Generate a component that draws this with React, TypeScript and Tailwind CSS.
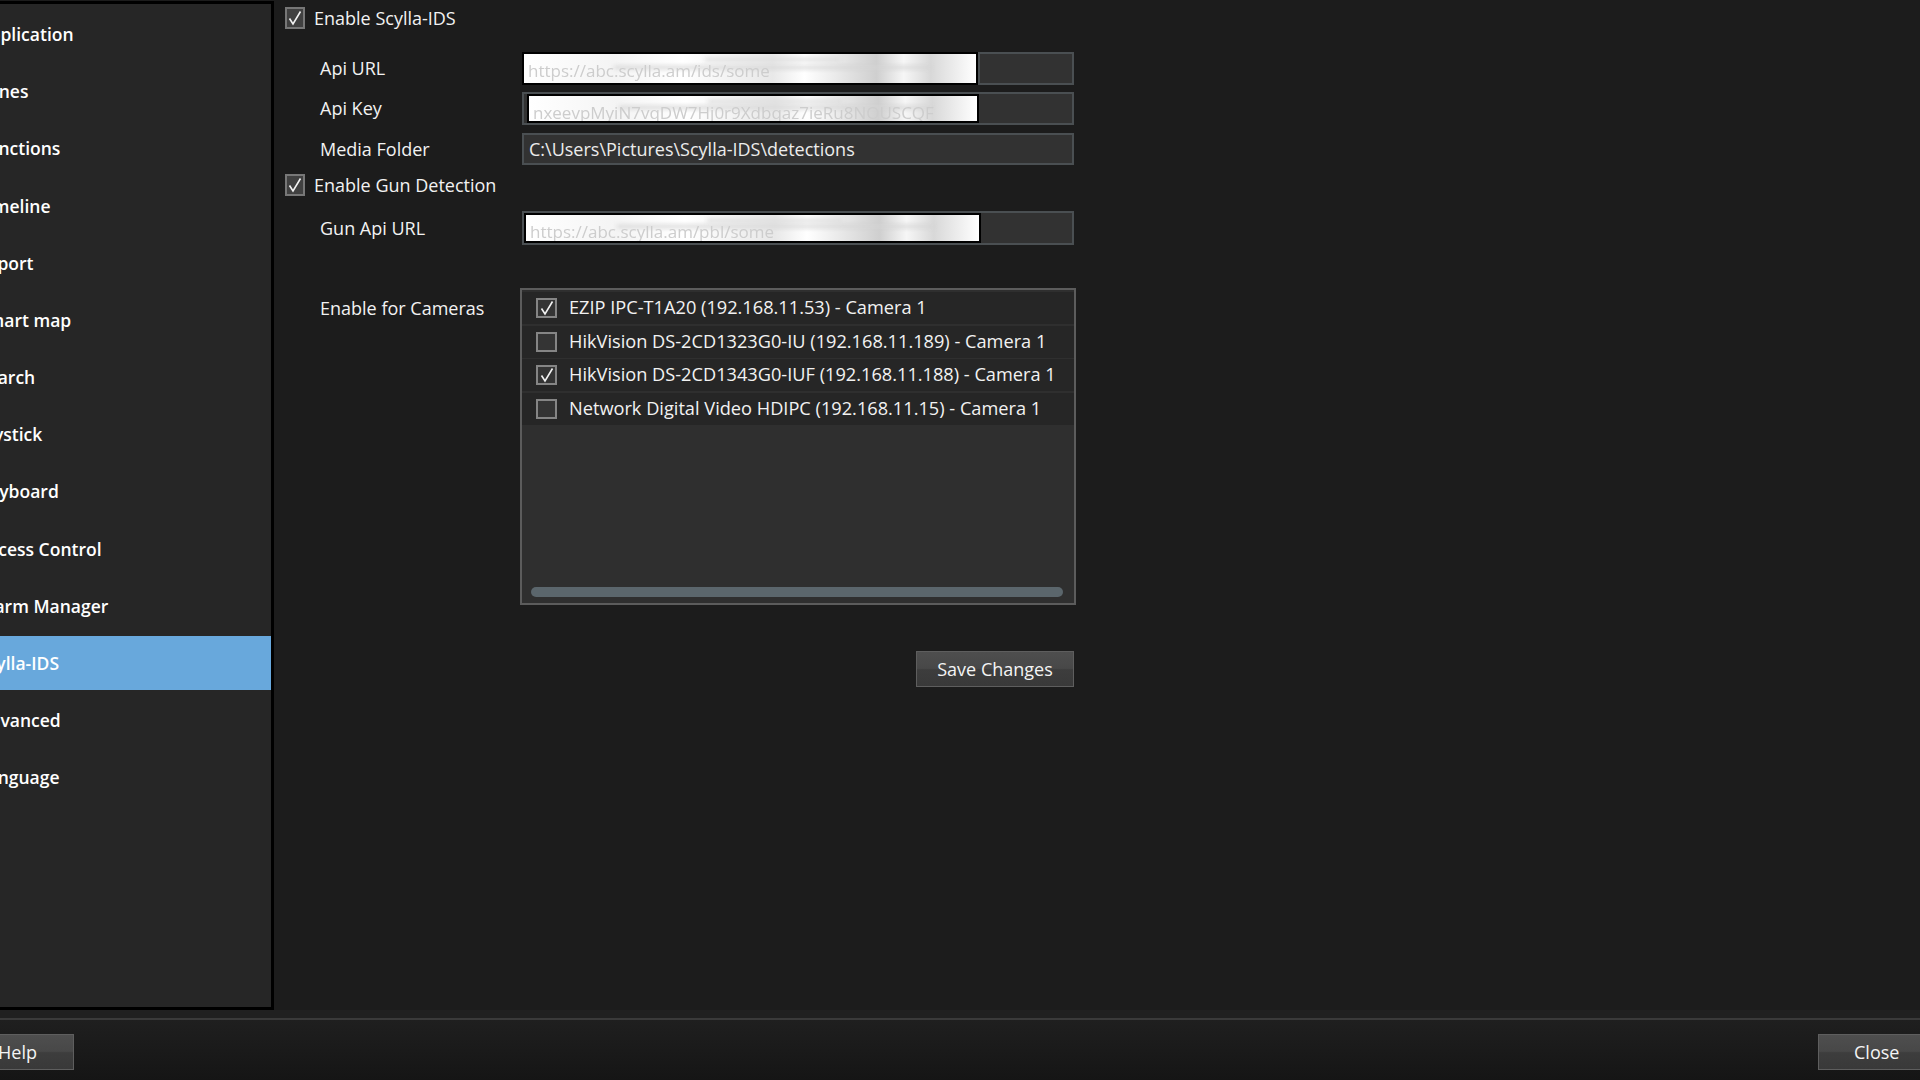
import React from "react";

const menu = [
  "Application",
  "Zones",
  "Functions",
  "Timeline",
  "Export",
  "Smart map",
  "Search",
  "Joystick",
  "Keyboard",
  "Access Control",
  "Alarm Manager",
  "Scylla-IDS",
  "Advanced",
  "Language",
];

const cameras = [
  { name: "EZIP IPC-T1A20 (192.168.11.53) - Camera 1", on: true },
  { name: "HikVision DS-2CD1323G0-IU (192.168.11.189) - Camera 1", on: false },
  { name: "HikVision DS-2CD1343G0-IUF (192.168.11.188) - Camera 1", on: true },
  { name: "Network Digital Video HDIPC (192.168.11.15) - Camera 1", on: false },
];

const CheckBox = ({ checked, small }: { checked: boolean; small?: boolean }) => (
  <div
    className={`flex items-center justify-center border-2 shrink-0 ${
      small ? "w-[21px] h-[20px] border-[#858585] bg-[#343434]" : "w-[20px] h-[22px] border-[#777777] bg-[#404040]"
    }`}
  >
    {checked && (
      <svg width="16" height="16" viewBox="0 0 16 16" fill="none">
        <path d="M2.5 8.5 L6 14 L13.5 1.5" stroke="#f2f2f2" strokeWidth="1.6" />
      </svg>
    )}
  </div>
);

// redacted (smudged) value inside a text box
const Redacted = ({ text, offset, width }: { text: string; offset: string; width: string }) => (
  <div className={`relative h-full ${offset} ${width} border-2 border-black bg-white overflow-hidden shrink-0`}>
    <div className="absolute inset-0 bg-[linear-gradient(90deg,#ffffff_0%,#f4f4f4_20%,#ffffff_35%,#e8e8e8_55%,#ffffff_62%,#cfcfcf_78%,#f6f6f6_84%,#d8d8d8_90%,#ffffff_100%)]" />
    <div className="absolute left-[20%] right-[10%] top-[40%] h-[3px] bg-[#d4d4d4] blur-[2px]" />
    <div className="absolute left-[40%] right-[30%] top-[15%] h-[3px] bg-[#dadada] blur-[2px]" />
    <span className="absolute left-[4px] top-[4px] text-[17px] text-[#cdcdcd] blur-[0.6px] whitespace-nowrap">{text}</span>
  </div>
);

const Label = ({ children }: { children: React.ReactNode }) => (
  <div className="w-[202px] text-[18px] text-[#f2f2f2] shrink-0">{children}</div>
);

const WinButton = ({ children, className }: { children: React.ReactNode; className: string }) => (
  <button
    className={`h-[36px] border border-[#5e5e5e] bg-[linear-gradient(to_bottom,#4e4e4e_0%,#484848_48%,#3d3d3d_52%,#393939_100%)] text-[18px] text-[#f4f4f4] ${className}`}
  >
    {children}
  </button>
);

export default function App() {
  return (
    <div className="w-[1920px] h-[1080px] overflow-hidden bg-[#1c1c1c] flex flex-col font-['Open_Sans',sans-serif]">
      <div className="h-[1010px] flex">
        {/* sidebar */}
        <aside className="-ml-[30px] w-[304px] h-[1009px] mt-[1px] border-[3px] border-black bg-[#262626] pt-[3px] shrink-0">
          {menu.map((m) => (
            <div
              key={m}
              className={`h-[54.2px] mb-[3px] pl-[5px] flex items-center text-[17.5px] font-semibold text-white whitespace-nowrap ${
                m === "Scylla-IDS" ? "bg-[#68a8dc]" : ""
              }`}
            >
              {m}
            </div>
          ))}
        </aside>

        {/* settings */}
        <main className="pl-[11px] flex flex-col">
          <div className="mt-[7px] h-[22px] flex items-center gap-[9px] text-[18px] text-[#f2f2f2]">
            <CheckBox checked />
            Enable Scylla-IDS
          </div>

          <div className="mt-[23px] ml-[35px] flex items-center">
            <Label>Api URL</Label>
            <div className="w-[552px] h-[33px] flex">
              <Redacted text="https://abc.scylla.am/ids/some" offset="" width="w-[456px]" />
              <div className="flex-1 border-2 border-[#4a4f52] bg-[#323232]" />
            </div>
          </div>

          <div className="mt-[7px] ml-[35px] flex items-center">
            <Label>Api Key</Label>
            <div className="w-[552px] h-[33px] flex border-2 border-[#4a4f52] bg-[#323232]">
              <Redacted text="nxeevpMyiN7vqDW7Hj0r9Xdbqaz7ieRu8NOUSCQF" offset="ml-[3px]" width="w-[452px]" />
            </div>
          </div>

          <div className="mt-[8px] ml-[35px] flex items-center">
            <Label>Media Folder</Label>
            <div className="w-[552px] h-[32px] flex items-center border-2 border-[#4a4f52] bg-[#323232] pl-[5px] text-[18px] text-[#ececec]">
              C:\Users\Pictures\Scylla-IDS\detections
            </div>
          </div>

          <div className="mt-[9px] h-[22px] flex items-center gap-[9px] text-[18px] text-[#f2f2f2]">
            <CheckBox checked />
            Enable Gun Detection
          </div>

          <div className="mt-[15px] ml-[35px] flex items-center">
            <Label>Gun Api URL</Label>
            <div className="w-[552px] h-[34px] flex border-2 border-[#4a4f52] bg-[#323232]">
              <Redacted text="https://abc.scylla.am/pbl/some" offset="" width="w-[457px]" />
            </div>
          </div>

          <div className="mt-[43px] ml-[35px] flex items-start">
            <div className="pt-[7px]">
              <Label>Enable for Cameras</Label>
            </div>
            <div className="w-[556px] h-[317px] ml-[-2px] border-2 border-[#5c5c5c] bg-[#2f2f2f] flex flex-col pt-[2px]">
              {cameras.map((c) => (
                <div
                  key={c.name}
                  className="h-[32px] mb-[1.5px] bg-[#262626] flex items-center gap-[12px] pl-[14px] text-[18.2px] text-[#f2f2f2] whitespace-nowrap"
                >
                  <CheckBox checked={c.on} small />
                  {c.name}
                </div>
              ))}
              <div className="mt-auto mb-[6px] ml-[9px] w-[532px] h-[10px] rounded-full bg-[#5b666c]" />
            </div>
          </div>

          <div className="mt-[46px] flex justify-end w-[789px]">
            <WinButton className="w-[158px]">Save Changes</WinButton>
          </div>
        </main>
      </div>

      <div className="h-[8px] bg-[#202020]" />
      <div className="h-[2px] bg-[#3a3a3a]" />
      <footer className="h-[60px] bg-[linear-gradient(to_bottom,#1f1f1f,#151515)] flex justify-between items-start pt-[14px]">
        <WinButton className="-ml-[30px] w-[104px] text-left pl-[27px]">Help</WinButton>
        <WinButton className="-mr-[30px] w-[132px] text-left pl-[35px]">Close</WinButton>
      </footer>
    </div>
  );
}
